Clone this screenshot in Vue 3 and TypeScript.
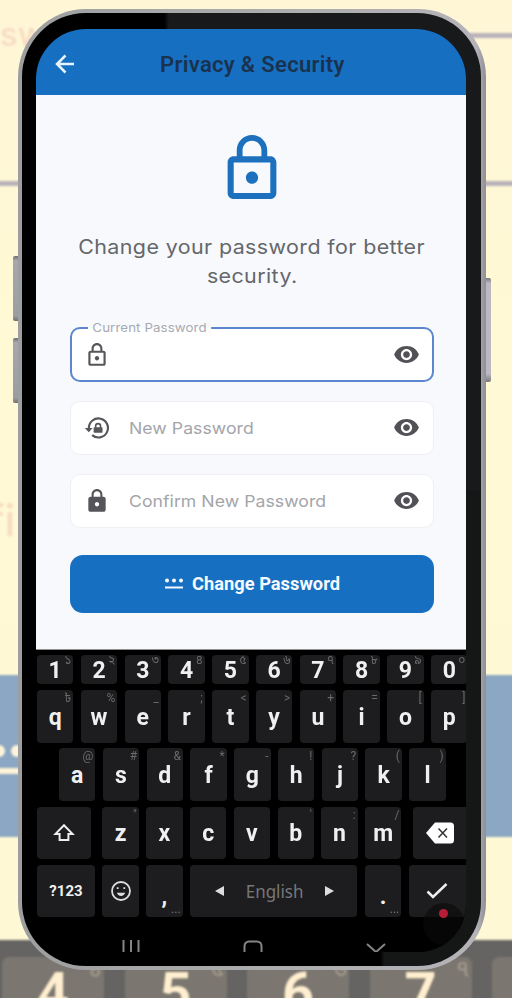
<script setup lang="ts">
import { ref } from 'vue'

interface Key { label: string; hint?: string }

const numberHints = '১২৩৪৫৬৭৮৯০'
const toKeys = (labels: string, hints: string[]): Key[] =>
  labels.split('').map((label, i) => ({ label, hint: hints[i] }))

const numberRow = toKeys('1234567890', Array.from(numberHints))
const topRow = toKeys('qwertyuiop', ['৳', '%', '_', ';', '<', '>', '+', '=', '[', ']'])
const homeRow = toKeys('asdfghjkl', ['@', '#', '&', '*', '-', '!', '?', '(', ')'])
const bottomRow = toKeys('zxcvbnm', ['"', '', '', '', "'", ':', '/'])

const backKeys: Key[] = [
  { label: '4', hint: '৪' },
  { label: '5', hint: '৫' },
  { label: '6', hint: '৬' },
  { label: '7', hint: '৭' },
  { label: '' },
]

const fields = ref([
  { id: 'current', label: 'Current Password', icon: 'outline', active: true },
  { id: 'next', label: 'New Password', icon: 'reset', active: false },
  { id: 'confirm', label: 'Confirm New Password', icon: 'solid', active: false },
])
</script>

<template>
  <main class="stage">
    <div class="backdrop">
      <span class="ghost ghost-top">sw</span>
      <span class="ghost ghost-mid">fi</span>
      <i class="rule rule-top"></i>
      <i class="rule rule-full"></i>
      <div class="band"><i class="dot"></i><i class="dot"></i><i class="dash"></i></div>
      <div class="back-keys">
        <div v-for="(k, i) in backKeys" :key="i" class="back-key">{{ k.label }}<small>{{ k.hint }}</small></div>
      </div>
    </div>
    <i class="side side-a"></i>
    <i class="side side-b"></i>
    <i class="side side-c"></i>

    <div class="phone">
      <div class="bezel">
        <div class="screen">
          <header class="bar">
            <svg class="back" viewBox="0 0 24 24"><path d="M21 12H4.500M12.500 3.500 4 12l8.500 8.500" /></svg>
            <h1>Privacy &amp; Security</h1>
          </header>

          <section class="content">
            <svg class="hero" viewBox="4 1 16 21">
              <path d="M12 17c1.1 0 2-.9 2-2s-.9-2-2-2-2 .9-2 2 .9 2 2 2zm6-9h-1V6c0-2.76-2.24-5-5-5S7 3.24 7 6v2H6c-1.1 0-2 .9-2 2v10c0 1.1.9 2 2 2h12c1.1 0 2-.9 2-2V10c0-1.1-.9-2-2-2zM8.9 6c0-1.71 1.39-3.1 3.1-3.1s3.1 1.39 3.1 3.1v2H8.9V6zM18 20H6V10h12v10z" />
            </svg>
            <p class="lead"><span class="line">Change your password for better</span><br /><span class="line">security.</span></p>

            <div v-for="f in fields" :key="f.id" class="field" :class="{ active: f.active }">
              <svg v-if="f.icon === 'outline'" class="lead-icon" viewBox="0 0 24 24">
                <path d="M12 17c1.1 0 2-.9 2-2s-.9-2-2-2-2 .9-2 2 .9 2 2 2zm6-9h-1V6c0-2.76-2.24-5-5-5S7 3.24 7 6v2H6c-1.1 0-2 .9-2 2v10c0 1.1.9 2 2 2h12c1.1 0 2-.9 2-2V10c0-1.1-.9-2-2-2zM8.9 6c0-1.71 1.39-3.1 3.1-3.1s3.1 1.39 3.1 3.1v2H8.9V6zM18 20H6V10h12v10z" />
              </svg>
              <svg v-else-if="f.icon === 'reset'" class="lead-icon" viewBox="0 0 24 24">
                <path d="M4.500 12A8.800 8.800 0 1 1 7.500 18.600" fill="none" stroke="currentColor" stroke-width="2" />
                <path d="M.8 12h7.200l-3.600 4zM9.800 11.200h.2v-1a3 3 0 0 1 6 0v1h.2c.5 0 .9.4.9.9v3.400c0 .5-.4.9-.9.9H9.800c-.5 0-.9-.4-.9-.9v-3.400c0-.5.4-.9.900-.9zm1.700 0h3v-1a1.500 1.500 0 0 0-3 0z" />
              </svg>
              <svg v-else class="lead-icon" viewBox="0 0 24 24">
                <path d="M18 8h-1V6c0-2.76-2.24-5-5-5S7 3.24 7 6v2H6c-1.1 0-2 .9-2 2v10c0 1.1.9 2 2 2h12c1.1 0 2-.9 2-2V10c0-1.1-.9-2-2-2zm-6 9c-1.1 0-2-.9-2-2s.9-2 2-2 2 .9 2 2-.9 2-2 2zm3.1-9H8.9V6c0-1.71 1.39-3.1 3.1-3.1s3.1 1.39 3.1 3.1v2z" />
              </svg>
              <label>{{ f.label }}</label>
              <svg class="eye" viewBox="0 0 24 24">
                <path d="M12 4.5C7 4.5 2.73 7.61 1 12c1.73 4.39 6 7.5 11 7.5s9.27-3.11 11-7.5c-1.73-4.39-6-7.5-11-7.5zM12 17c-2.76 0-5-2.24-5-5s2.24-5 5-5 5 2.24 5 5-2.24 5-5 5zm0-8c-1.66 0-3 1.34-3 3s1.34 3 3 3 3-1.34 3-3-1.34-3-3-3z" />
              </svg>
            </div>

            <button class="submit" type="button">
              <svg viewBox="0 0 20 14"><circle cx="3" cy="3.500" r="2" /><circle cx="10" cy="3.500" r="2" /><circle cx="17" cy="3.500" r="2" /><path d="M1 9.500h18v2H1z" /></svg>
              <span>Change Password</span>
            </button>
          </section>

          <section class="keyboard">
            <div class="row numbers">
              <div v-for="k in numberRow" :key="k.label" class="key"><small>{{ k.hint }}</small>{{ k.label }}</div>
            </div>
            <div class="row">
              <div v-for="k in topRow" :key="k.label" class="key"><small>{{ k.hint }}</small>{{ k.label }}</div>
            </div>
            <div class="row home">
              <div v-for="k in homeRow" :key="k.label" class="key"><small>{{ k.hint }}</small>{{ k.label }}</div>
            </div>
            <div class="row">
              <div class="key shift">
                <svg viewBox="0 0 24 20"><path d="M12 2.2 3.500 10.900h4.100V17h8.800v-6.100h4.100z" /></svg>
              </div>
              <div v-for="k in bottomRow" :key="k.label" class="key"><small>{{ k.hint }}</small>{{ k.label }}</div>
              <div class="key erase">
                <svg viewBox="0 0 28 22"><path d="M9 .5h15.500a3.500 3.500 0 0 1 3.500 3.500v14a3.500 3.500 0 0 1-3.500 3.500H9L0 11z" /><path class="cross" d="m12.500 6.500 8.500 9m0-9-8.500 9" /></svg>
              </div>
            </div>
            <div class="row">
              <div class="key symbols">?123</div>
              <div class="key">
                <svg class="smile" viewBox="0 0 22 22"><circle cx="11" cy="11" r="9" /><path class="mouth" d="M6.800 12.800h8.400c-.6 2-2.200 3.200-4.200 3.200s-3.600-1.200-4.200-3.200z" /><path d="M7.700 7.200v1.800M14.300 7.200v1.800" /></svg>
              </div>
              <div class="key punct">,<small>...</small></div>
              <div class="key space"><i class="tri left"></i><span>English</span><i class="tri right"></i></div>
              <div class="key punct">.<small>...</small></div>
              <div class="key enter">
                <svg viewBox="0 0 22 18"><path d="m1.500 9.500 5.500 5.500L20.500 2" /></svg>
              </div>
            </div>
            <nav class="system">
              <svg class="recent" viewBox="0 0 18 12"><path d="M1.500 0v12M9 0v12M16.500 0v12" /></svg>
              <svg class="homebtn" viewBox="0 0 20 12"><path d="M1.500 12V6a4.500 4.500 0 0 1 4.500-4.500h8A4.500 4.500 0 0 1 18.500 6v6" /></svg>
              <svg class="down" viewBox="0 0 20 10"><path d="m1 1 9 8 9-8" /></svg>
            </nav>
            <div class="pulse"><i></i></div>
          </section>
        </div>
      </div>
    </div>
  </main>
</template>

<style>
body { background: #fff7d5; overflow: hidden; }
</style>

<style scoped>
* { box-sizing: border-box; }
.stage { position: relative; width: 512px; height: 998px; overflow: hidden; background: linear-gradient(#fff6d6, #fff9d5 35%, #fff8d5); font-family: Roboto, "Liberation Sans", sans-serif; padding: 9px 0 0 18px; }
.backdrop { position: absolute; inset: 0; filter: blur(1px); }
.ghost { position: absolute; font-family: Inter, sans-serif; font-weight: 500; color: #f6dcc1; line-height: 1; }
.ghost-top { left: 0; top: 18px; font-size: 33px; }
.ghost-mid { left: -12px; top: 499px; font-size: 43px; }
.rule { position: absolute; height: 5px; background: #b9b2b9; }
.rule-top { left: 460px; right: -5px; top: 33px; }
.rule-full { left: -5px; right: -5px; top: 181px; }
.band { position: absolute; left: -5px; right: -5px; top: 675px; height: 162px; background: #8ca7c3; }
.dot { position: absolute; top: 70px; width: 12px; height: 12px; border-radius: 50%; background: #fff4d9; left: -2px; }
.dot + .dot { left: 16px; }
.dash { position: absolute; left: 0; top: 93px; width: 40px; height: 6px; background: #fff4d9; }
.back-keys { position: absolute; left: -5px; right: -30px; top: 940px; height: 70px; background: #656463; padding: 17px 0 0 7px; display: flex; gap: 20.500px; }
.back-key { position: relative; flex: none; width: 102px; height: 60px; border-radius: 7px; background: #7b766f; color: #ffefd0; font: 700 56px/1 Roboto, sans-serif; padding: 8px 0 0; text-align: center; }
.back-key small { position: absolute; right: 2px; top: 3px; font: 500 22px/1 "Noto Sans Bengali", "Noto Sans", sans-serif; color: #a59b8d; }
.side { position: absolute; width: 8px; background: linear-gradient(#6f7072, #a5a7aa 7%, #9b9ea1 92%, #6f7072); border-radius: 2px; }
.side-a { left: 13px; top: 256px; height: 65px; }
.side-b { left: 13px; top: 338px; height: 65px; }
.side-c { left: 483px; top: 278px; height: 104px; background: linear-gradient(#74747a, #bbbac2 5%, #bbbac2 92%, #77777c); }

.phone { position: relative; width: 468px; height: 961px; padding: 4px 5px 4px 4px; border-radius: 68px; background: linear-gradient(90deg, #9c9ea0, #aaacac 50%, #b5b3b9 98%, #8f8e94); }
.bezel { height: 953px; border-radius: 64px; padding: 16px 15px 14px 14px; background: linear-gradient(90deg, #000 78%, #151616 79%) 0 100% / 100% 50% no-repeat, linear-gradient(90deg, #000 31%, #18191a 32%); }
.screen { position: relative; width: 430px; height: 923px; border-radius: 50px 50px 48px 48px; overflow: hidden; background: #000; }
.bar { height: 66px; background: #176fc1; display: flex; align-items: center; padding: 3px 0 0 17px; }
.back { width: 24px; height: 24px; fill: none; stroke: #e5f3ff; stroke-width: 2.500; }
h1 { margin: 2px 0 0 83px; font-size: 22px; font-weight: 600; letter-spacing: .32px; color: #19334f; line-height: 28px; white-space: nowrap; }
.content { height: 555px; background: #f7f9fc; border-bottom: 1px solid #8e9092; padding: 40px 32px 0 34px; display: flex; flex-direction: column; }
.hero { width: 50px; height: 64px; align-self: center; fill: #1d70bd; margin-bottom: 34px; flex: none; }
.lead { margin: 0 0 36px; text-align: center; font: 400 19.500px/29px Inter, sans-serif; color: #65676b; white-space: nowrap; }
.line { display: inline-block; transform: scaleX(1.1); letter-spacing: .35px; }
.field { position: relative; height: 54px; flex: none; margin-bottom: 19px; border: 1px solid #eef0f3; border-radius: 10px; background: #fff; padding: 0 14px 0 13px; display: flex; align-items: center; color: #515156; }
.field.active { height: 55px; border: 2px solid #5c86cf; padding: 0 13px 0 12px; margin-bottom: 18.500px; }
.lead-icon { width: 26px; height: 26px; fill: currentColor; flex: none; color: #55555a; }
label { margin-left: 19px; font: 400 16.500px/24px Inter, sans-serif; color: #a3a5aa; white-space: nowrap; letter-spacing: .05px; transform: scaleX(1.068); transform-origin: 0 50%; }
.active label { position: absolute; left: 16px; top: -9px; margin: 0; padding: 0 4px; font-size: 12.300px; line-height: 16px; background: linear-gradient(#f7f9fc 50%, #fff 50%); letter-spacing: .1px; color: #a7a9b0; transform: scaleX(1.08); }
.eye { width: 27px; height: 27px; margin-left: auto; margin-right: -1px; fill: #515156; }
.submit { height: 58px; flex: none; margin-top: 8px; border: 0; border-radius: 13px; background: #176fc1; color: #f4faff; display: flex; justify-content: center; align-items: center; gap: 8px; font: 700 18.300px/24px Roboto, sans-serif; padding-top: 2px; }
.submit svg { width: 20px; height: 14px; fill: currentColor; }
.keyboard { position: relative; height: 302px; padding: 5px 0 0 1px; background: #000; color: #f0f0f0; }
.row { display: flex; gap: 7.400px; height: 52.500px; margin-bottom: 5.800px; }
.numbers { height: 29px; margin-bottom: 6px; }
.home { padding-left: 22px; }
.key { position: relative; flex: none; width: 36.400px; border-radius: 4px; background: #1d1d1f; display: flex; align-items: center; justify-content: center; font: 700 23px/1 Roboto, sans-serif; padding-top: 2px; }
.key small { position: absolute; right: 2px; top: 2px; font: 400 12px/13px Roboto, "Noto Sans Bengali", "Noto Sans", sans-serif; color: #6a6a6d; }
.key svg { fill: none; stroke: #eee; stroke-width: 2; }
.numbers .key small { top: -1px; }
.shift { width: 54px; margin-right: 4px; }
.shift svg { width: 24px; height: 20px; margin-top: -2px; }
.erase { width: 56px; margin-left: 4px; }
.erase svg { width: 28px; height: 22px; fill: #fff; stroke: none; margin: -2px 0 0 -2px; }
.erase .cross { stroke: #333; stroke-width: 1.500; }
.symbols { width: 58px; font-size: 15px; padding-top: 1px; }
.smile { width: 22px; height: 22px; margin-top: -3px; }
.key .smile { stroke-width: 1.800; stroke: #ddd; }
.smile .mouth { fill: #ddd; stroke: none; }
.punct { padding-top: 10px; }
.punct small { top: auto; bottom: 1px; right: 2px; color: #77777a; }
.space { width: 167.500px; gap: 23px; font-size: 19px; font-weight: 400; color: #77777a; padding: 0 0 0 1px; }
.space span { font: 400 18px/1 "Noto Sans", sans-serif; transform: scaleX(.94); margin: 0 -3px; }
.tri { width: 0; height: 0; border-top: 5px solid transparent; border-bottom: 5px solid transparent; }
.left { border-right: 9px solid #ddd; }
.right { border-left: 9px solid #ddd; }
.enter { width: 60px; }
.enter svg { width: 22px; height: 18px; stroke-width: 2.500; margin: -3px 0 0 -3px; }
.system { display: flex; height: 15px; margin-top: 23px; padding-left: 85px; align-items: flex-start; }
.system svg { fill: none; stroke: #858585; stroke-width: 2; flex: none; }
.recent { width: 18px; height: 12px; }
.homebtn { width: 20px; height: 12px; margin-left: 103px; }
.down { width: 20px; height: 10px; margin: 3px 0 0 103px; }
.pulse { position: absolute; left: 387px; top: 253px; width: 42px; height: 42px; border-radius: 50%; background: rgba(10, 10, 10, .6); display: flex; align-items: flex-start; justify-content: center; padding-top: 6px; }
.pulse i { width: 9px; height: 9px; margin-right: 2px; border-radius: 50%; background: #b71d38; }
</style>
